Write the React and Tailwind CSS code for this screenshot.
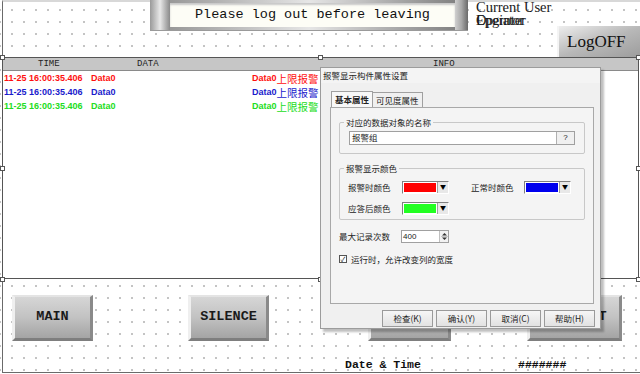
import React from "react";

const cjk = "font-['Noto_Sans_CJK_SC',sans-serif]";

const rows = [
  { color: "text-[#ff1010]" },
  { color: "text-[#1a1acc]" },
  { color: "text-[#22dd22]" },
];

const handles = [
  "left-[0px] top-[55px]",
  "left-[318px] top-[55px]",
  "left-[636px] top-[55px]",
  "left-[0px] top-[166px]",
  "left-[636px] top-[166px]",
  "left-[0px] top-[277px]",
  "left-[318px] top-[277px]",
  "left-[636px] top-[277px]",
];

const HmiButton = ({ className, children }) => (
  <div
    className={`absolute h-[46px] flex items-center border-l-[3px] border-t-[2px] border-l-[#efefef] border-t-[#e4e4e4] border-r-[3px] border-b-[3px] border-r-[#8a8a8a] border-b-[#7e7e7e] bg-linear-to-b from-[#d6d6d6] via-[#c2c2c2] to-[#a4a4a4] font-['Liberation_Mono',monospace] font-bold text-[13.5px] text-[#1a1a1a] ${className}`}
  >
    {children}
  </div>
);

const ColorPick = ({ fill }) => (
  <div className="flex h-[13px] w-[47px] border border-t-[#808080] border-l-[#808080] border-b-white border-r-white bg-white">
    <div className={`flex-1 m-[1px] ${fill}`}></div>
    <div className="w-[11px] bg-[#e8e8e8] border-l border-[#a0a0a0] flex items-center justify-center text-[6px] leading-none text-black">
      ▼
    </div>
  </div>
);

const DlgButton = ({ children }) => (
  <div className="w-[51px] h-[17px] border border-[#9a9a9a] bg-linear-to-b from-[#f6f6f6] to-[#e2e2e2] flex items-center justify-center text-[8.5px] text-[#222]">
    {children}
  </div>
);

const App = () => {
  return (
    <div className="relative w-[640px] h-[374px] overflow-hidden bg-white bg-[radial-gradient(circle,#c4c4c4_0.8px,transparent_1px)] bg-[length:12px_12px] bg-[position:6px_4px]">
      {/* canvas frame */}
      <div className="absolute left-[2px] top-0 w-[640px] h-[373px] border-l border-b border-[#6a6a6a] border-t-2 border-t-[#d8d8d8]"></div>

      {/* banner */}
      <div className="absolute left-[150px] top-0 w-[318px] h-[31px] flex bg-linear-to-r from-[#8e8e8e] via-[#e6e6e6] to-[#7a7a7a] border-b border-[#9a9a9a]">
        <div className="w-[20px] bg-linear-to-r from-[#9a9a9a] via-[#e8e8e8] to-[#8a8a8a]"></div>
        <div className="flex-1 my-[3px] bg-[#fdfdf6] shadow-[inset_0_2px_2px_#c8c8c8] flex items-center pl-[25px] font-['Liberation_Mono',monospace] text-[13.5px] text-[#111]">
          Please log out before leaving
        </div>
        <div className="w-[13px] bg-linear-to-r from-[#d0d0d0] via-[#a8a8a8] to-[#6a6a6a]"></div>
      </div>

      {/* current user */}
      <div className="absolute left-[476px] top-[1px] font-['Liberation_Serif',serif] text-[14.5px] leading-[13px] text-[#1a1a1a]">
        <div>Current User</div>
        <div className="relative h-[13px]">
          <span className="absolute left-0 top-0">Epginter</span>
          <span className="absolute left-0 top-0 tracking-[-0.5px]">Operator</span>
        </div>
      </div>

      {/* logoff */}
      <div className="absolute left-[557px] top-[26px] w-[86px] h-[31px] flex items-center pl-[8px] bg-linear-to-br from-[#eeeeee] via-[#b8b8b8] to-[#9c9c9c] border-l-2 border-[#f4f4f4] font-['Liberation_Serif',serif] text-[17px] text-[#111]">
        LogOFF
      </div>

      {/* alarm table */}
      <div className="absolute left-[2px] top-[57px] w-[637px] h-[222px] bg-white border border-[#555]">
        <div className="h-[13px] bg-[#c6c6c6] border-b border-[#8a8a8a] relative font-['Liberation_Mono',monospace] text-[9px] leading-[13px] text-[#222]">
          <span className="absolute left-[35px]">TIME</span>
          <span className="absolute left-[134px]">DATA</span>
          <span className="absolute left-[430px]">INFO</span>
        </div>
        <div className="pt-[1px]">
          {rows.map((r, i) => (
            <div
              key={i}
              className={`flex items-center h-[14px] font-['Liberation_Sans',sans-serif] font-bold text-[9px] ${r.color}`}
            >
              <span className="w-[88px] pl-[1px]">11-25 16:00:35.406</span>
              <span className="w-[161px]">Data0</span>
              <span>Data0</span>
              <span className={`${cjk} font-normal text-[10.5px] leading-none`}>上限报警</span>
            </div>
          ))}
        </div>
      </div>
      {handles.map((h, i) => (
        <div key={i} className={`absolute w-[5px] h-[5px] bg-white border border-[#555] ${h}`}></div>
      ))}

      {/* bottom buttons */}
      <HmiButton className="left-[12px] top-[295px] w-[81px] justify-center">MAIN</HmiButton>
      <HmiButton className="left-[188px] top-[295px] w-[81px] justify-center">SILENCE</HmiButton>
      <HmiButton className="left-[368px] top-[295px] w-[83px] justify-center"></HmiButton>
      <HmiButton className="left-[527px] top-[295px] w-[95px] pl-[36px]">RESET</HmiButton>

      {/* date & time */}
      <div className="absolute left-[345px] top-[356px] font-['Liberation_Mono',monospace] font-bold text-[11.5px] text-[#111]">
        Date &amp; Time
      </div>
      <div className="absolute left-[518px] top-[356px] font-['Liberation_Mono',monospace] font-bold text-[11.5px] text-[#111]">
        #######
      </div>

      {/* property dialog */}
      <div
        className={`absolute left-[320px] top-[67px] w-[281px] h-[262px] bg-[#f0f0f0] border border-[#9c9c9c] shadow-[3px_3px_2px_rgba(0,0,0,0.25)] ${cjk} text-[8.5px] text-[#222] flex flex-col`}
      >
        <div className="h-[15px] flex items-center pl-[2px] bg-[#f4f4f4]">报警显示构件属性设置</div>
        <div className="flex pl-[10px] mt-[8px] h-[16px] items-end">
          <div className="h-[16px] px-[3px] flex items-center bg-[#f8f8f8] border border-b-0 border-[#a0a0a0] font-bold">基本属性</div>
          <div className="h-[15px] px-[3px] flex items-center border border-b-0 border-l-0 border-[#a0a0a0]">可见度属性</div>
        </div>
        <div className="ml-[9px] mr-[6px] h-[197px] border border-[#a8a8a8] bg-[#f4f4f4] px-[8px] pt-[8px] flex flex-col">
          <fieldset className="border border-[#c8c8c8] rounded-[2px] h-[38px] px-[9px]">
            <legend className="px-[2px] -ml-[5px]">对应的数据对象的名称</legend>
            <div className="flex h-[14px] mt-[2px] border border-[#a0a0a0] bg-white">
              <div className="flex-1 pl-[2px] flex items-center">报警组</div>
              <div className="w-[18px] border-l border-[#b0b0b0] bg-[#f0f0f0] flex items-center justify-center font-['Liberation_Sans',sans-serif] text-[8px]">?</div>
            </div>
          </fieldset>
          <fieldset className="mt-[8px] border border-[#c8c8c8] rounded-[2px] h-[58px] pl-[8px]">
            <legend className="px-[2px] -ml-[4px]">报警显示颜色</legend>
            <div className="flex items-center mt-[6px] h-[13px]">
              <span className="w-[54px]">报警时颜色</span>
              <ColorPick fill="bg-[#ff0000]" />
              <span className="ml-[22px] w-[53px]">正常时颜色</span>
              <ColorPick fill="bg-[#0000ee]" />
            </div>
            <div className="flex items-center mt-[8px] h-[13px]">
              <span className="w-[54px]">应答后颜色</span>
              <ColorPick fill="bg-[#22ff22]" />
            </div>
          </fieldset>
          <div className="flex items-center mt-[10px] h-[13px]">
            <span className="w-[62px]">最大记录次数</span>
            <div className="flex w-[48px] h-[13px] border border-[#a0a0a0] bg-white">
              <div className="flex-1 pl-[1px] flex items-center font-['Liberation_Sans',sans-serif] text-[8px]">400</div>
              <div className="w-[9px] border-l border-[#c0c0c0] bg-[#f2f2f2] flex items-center justify-center">
                <svg width="7" height="9" viewBox="0 0 7 9">
                  <path d="M1 3.5 L3.5 1 L6 3.5 Z" fill="#333" />
                  <path d="M1 5.5 L3.5 8 L6 5.5 Z" fill="#333" />
                  <line x1="0" y1="4.5" x2="7" y2="4.5" stroke="#aaa" strokeWidth="0.6" />
                </svg>
              </div>
            </div>
          </div>
          <div className="flex items-center mt-[10px] gap-[4px]">
            <div className="w-[8px] h-[8px] border border-[#555] bg-white flex items-center justify-center text-[7px] leading-none">✓</div>
            <span>运行时，允许改变列的宽度</span>
          </div>
        </div>
        <div className="flex gap-[3px] pl-[61px] mt-[6px]">
          <DlgButton>检查(K)</DlgButton>
          <DlgButton>确认(Y)</DlgButton>
          <DlgButton>取消(C)</DlgButton>
          <DlgButton>帮助(H)</DlgButton>
        </div>
      </div>
    </div>
  );
};

export default App;
